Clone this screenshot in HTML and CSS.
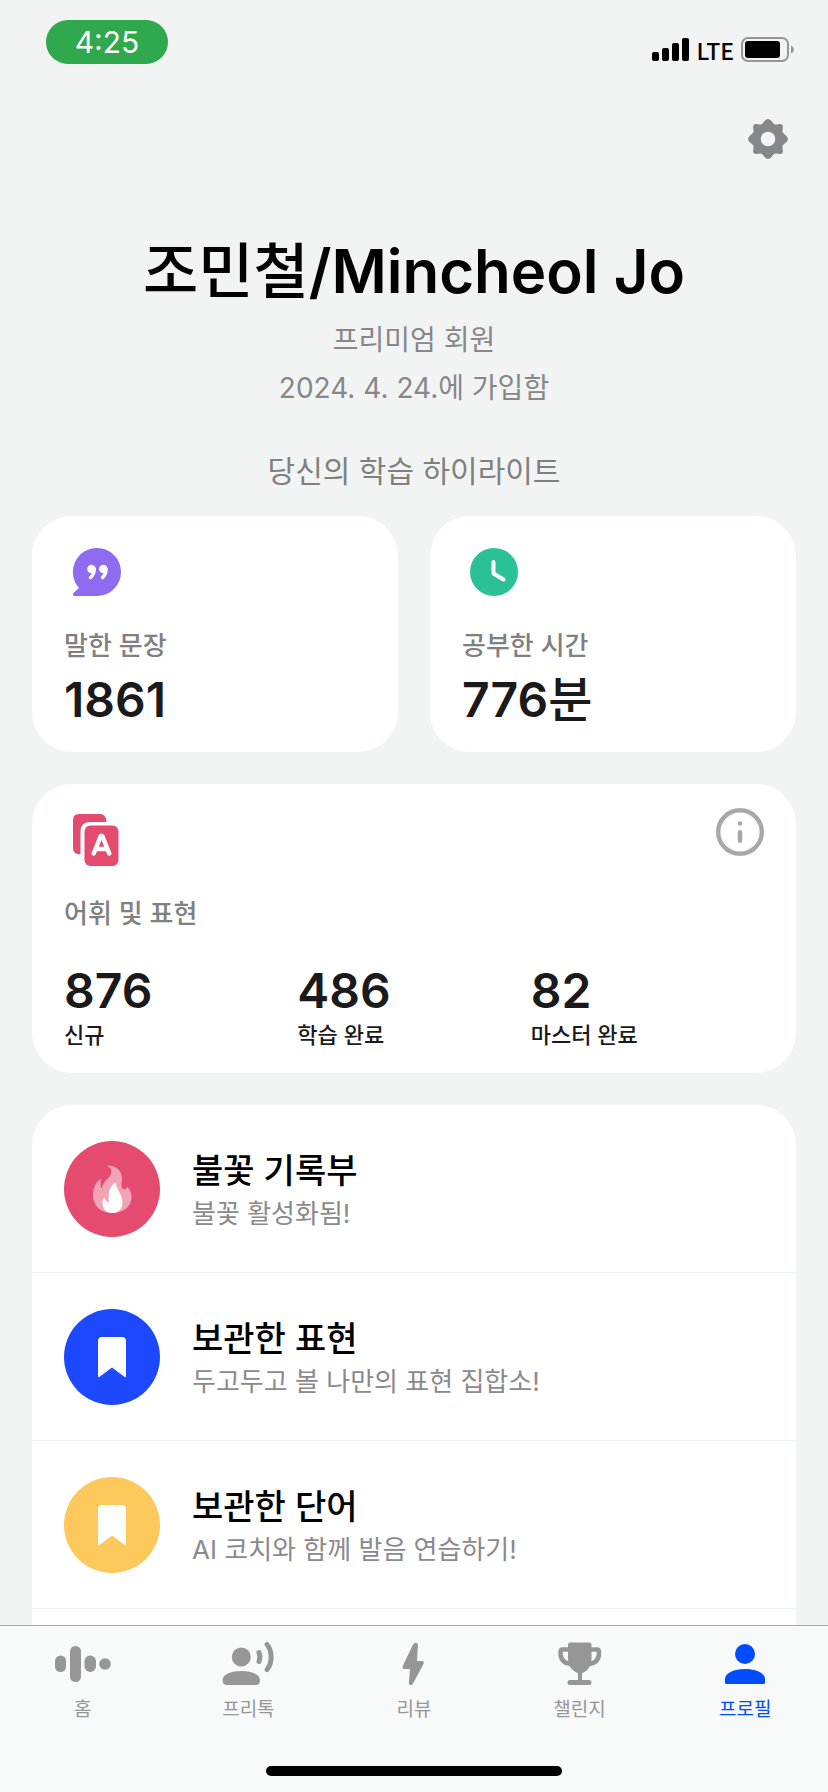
FILE: index.html
```
<!DOCTYPE html>
<html lang="ko">
<head>
<meta charset="utf-8">
<meta name="viewport" content="width=device-width, initial-scale=1">
<title>프로필</title>
<link rel="stylesheet" href="styles.css">
</head>
<body>
<div class="app">
  <header class="status">
    <span class="clock">4:25</span>
    <div class="signals">
      <svg class="bars" viewBox="0 0 37 24" aria-hidden="true">
        <rect x="0" y="14" width="7" height="9" rx="2"/><rect x="10" y="10" width="7" height="13" rx="2"/><rect x="20" y="5" width="7" height="18" rx="2"/><rect x="30" y="0" width="7" height="23" rx="2"/>
      </svg>
      <span class="network">LTE</span>
      <svg class="battery" viewBox="0 0 53 25" aria-hidden="true">
        <rect x="1" y="1" width="46" height="23" rx="6" fill="none" stroke="#969797" stroke-width="2"/>
        <rect x="4" y="4" width="35" height="17" rx="3"/>
        <path d="M50 8.500Q53 9.800 53 12.500T50 16.500Z" fill="#969797"/>
      </svg>
    </div>
  </header>

  <main class="page">
    <div class="toolbar">
      <button class="icon-button" type="button" aria-label="설정">
        <svg class="gear" viewBox="-20 -20 40 40" aria-hidden="true">
          <path fill="#87868b" fill-rule="evenodd" d="M-3.300 -18.200Q0 -21.600 3.300 -18.200L5.400 -15.600Q6.600 -14.200 8.500 -14.500L11.500 -14.900Q15.300 -15 14.900 -11.500L14.500 -8.500Q14.200 -6.600 15.600 -5.400L18.200 -3.300Q21.600 0 18.200 3.300L15.600 5.400Q14.200 6.600 14.500 8.500L14.900 11.500Q15 15.300 11.500 14.900L8.500 14.500Q6.600 14.200 5.400 15.600L3.300 18.200Q0 21.600 -3.300 18.200L-5.400 15.600Q-6.600 14.200 -8.500 14.500L-11.500 14.900Q-15.300 15 -14.900 11.500L-14.500 8.500Q-14.200 6.600 -15.600 5.400L-18.200 3.300Q-21.600 0 -18.200 -3.300L-15.600 -5.400Q-14.200 -6.600 -14.500 -8.500L-14.900 -11.500Q-15 -15.300 -11.500 -14.900L-8.500 -14.500Q-6.600 -14.200 -5.400 -15.600ZM7.300 0A7.300 7.300 0 1 0 -7.300 0A7.300 7.300 0 1 0 7.300 0Z"/>
        </svg>
      </button>
    </div>

    <section class="profile">
      <h1 class="name"><span class="hangul">조민철</span>/Mincheol Jo</h1>
      <p class="meta">프리미엄 회원</p>
      <p class="meta">2024. 4. 24.에 가입함</p>
    </section>

    <h2 class="section-title">당신의 학습 하이라이트</h2>

    <div class="cards">
      <section class="card">
        <svg class="card-icon" viewBox="0 0 64 64" aria-hidden="true">
          <path fill="#8f6bef" d="M33 8A24 24 0 0 1 33 56H10.500Q8 55.500 9.500 53L15 48A24 24 0 0 1 33 8Z"/>
          <g fill="#fff" stroke="#fff"><circle cx="27.500" cy="29" r="4.300" stroke="none"/><circle cx="39.300" cy="29" r="4.300" stroke="none"/><path fill="none" stroke-width="3.500" stroke-linecap="round" d="M30 29Q30.500 34 26.500 37.500M41.800 29Q42.300 34 38.500 37.500"/></g>
        </svg>
        <h3 class="label">말한 문장</h3>
        <p class="value">1861</p>
      </section>
      <section class="card">
        <svg class="card-icon" viewBox="0 0 64 64" aria-hidden="true">
          <circle cx="32" cy="32" r="24" fill="#2bc197"/>
          <path d="M31.500 22V33.500L41.500 39.500" fill="none" stroke="#fff" stroke-width="4" stroke-linecap="round" stroke-linejoin="round"/>
        </svg>
        <h3 class="label">공부한 시간</h3>
        <p class="value">776<span class="hangul">분</span></p>
      </section>

      <section class="card card-wide">
        <div class="card-top">
          <svg class="card-icon" viewBox="0 0 64 64" aria-hidden="true">
            <path fill="#e44b6e" d="M15 6H36Q42 6 42.500 14H26Q16.500 14 16.500 24V46.500Q9 46 9 40V12Q9 6 15 6Z"/>
            <rect x="20.500" y="17.500" width="34" height="40.500" rx="6" fill="#e44b6e"/>
            <path d="M29.700 45.500L36.500 28.500Q37.500 27 38.500 28.500L45.300 45.500M32 41H43" fill="none" stroke="#fff" stroke-width="4.500" stroke-linecap="round" stroke-linejoin="round"/>
          </svg>
          <button class="icon-button" type="button" aria-label="정보">
            <svg class="info" viewBox="0 0 48 48" aria-hidden="true">
              <circle cx="24" cy="24" r="21.800" fill="none" stroke="#a8a8a8" stroke-width="4.400"/>
              <circle cx="24" cy="15.500" r="2.300" fill="#a8a8a8"/>
              <rect x="21.800" y="22" width="4.500" height="13" rx="2.200" fill="#a8a8a8"/>
            </svg>
          </button>
        </div>
        <h3 class="label">어휘 및 표현</h3>
        <dl class="stats">
          <div class="stat"><dt>신규</dt><dd>876</dd></div>
          <div class="stat"><dt>학습 완료</dt><dd>486</dd></div>
          <div class="stat"><dt>마스터 완료</dt><dd>82</dd></div>
        </dl>
      </section>
    </div>

    <ul class="list">
      <li><a class="row" href="#">
        <span class="badge badge-red">
          <svg class="badge-icon" viewBox="0 0 96 96" aria-hidden="true">
            <path fill="#f2a4b6" d="M43 24.500C51 24 58 29 58 38C58 42 56.500 46 59 48C61.500 49 63 47.500 63 45.500C66 48 67.500 52 67.500 56C67.500 66 59 72 48 72C37 72 29 65 29 54C29 47 32 41 36.500 38C37 42 36 45 38 47.500C38.500 39 48 37 47.500 30C47.300 27.500 45.500 26 43 24.500Z"/>
            <path fill="#fff" d="M52 41C51 47 58.500 53 58.500 61C58.500 68 54 72 48.500 72C42.500 72 38.500 68 38.500 62C38.500 59.500 39 58 40.500 56.500C41 59 42.500 60.500 45 61.500C44 53 44.500 45.500 52 41Z"/>
          </svg>
        </span>
        <span class="row-text"><strong>불꽃 기록부</strong><span>불꽃 활성화됨!</span></span>
      </a></li>
      <li><a class="row" href="#">
        <span class="badge badge-blue">
          <svg class="badge-icon" viewBox="0 0 96 96" aria-hidden="true"><path fill="#fff" d="M38 28H58Q62 28 62 32V67Q62 69 60 67.500L48 58.500L36 67.500Q34 69 34 67V32Q34 28 38 28Z"/></svg>
        </span>
        <span class="row-text"><strong>보관한 표현</strong><span>두고두고 볼 나만의 표현 집합소!</span></span>
      </a></li>
      <li><a class="row" href="#">
        <span class="badge badge-yellow">
          <svg class="badge-icon" viewBox="0 0 96 96" aria-hidden="true"><path fill="#fff" d="M38 28H58Q62 28 62 32V67Q62 69 60 67.500L48 58.500L36 67.500Q34 69 34 67V32Q34 28 38 28Z"/></svg>
        </span>
        <span class="row-text"><strong>보관한 단어</strong><span>AI 코치와 함께 발음 연습하기!</span></span>
      </a></li>
    </ul>
  </main>

  <nav class="tabs">
    <div class="tab-row">
      <a class="tab" href="#">
        <svg class="tab-icon" viewBox="0 0 60 48" aria-hidden="true"><rect x="2" y="15.500" width="11" height="16.500" rx="5.500"/><rect x="17" y="6" width="11" height="36" rx="5.500"/><rect x="31.500" y="15.500" width="11.500" height="16.500" rx="5.700"/><circle cx="52" cy="24" r="5.800"/></svg>
        홈</a>
      <a class="tab" href="#">
        <svg class="tab-icon" viewBox="0 0 60 48" aria-hidden="true"><circle cx="23.300" cy="17" r="9.500"/><path d="M4.600 40C4.600 34 14 31 23.300 31S42 34 42 40Q42 45 37.500 45H9Q4.600 45 4.600 40Z"/><path fill="none" stroke="currentColor" stroke-width="5" stroke-linecap="round" stroke-linejoin="round" d="M41 12.500Q42.800 17 41 21.500M49 4.500C54.500 11 54.500 23 49 29.500"/></svg>
        프리톡</a>
      <a class="tab" href="#">
        <svg class="tab-icon" viewBox="0 0 60 48" aria-hidden="true"><path d="M29 4.500Q30 2.800 32 2.800Q34 3 34 5L33 21H38Q40.500 21.500 39.500 24L29 43.500Q28 45.500 26 45Q24.800 44.500 24.800 43L26 29H20Q18 28.500 18.800 26Z"/></svg>
        리뷰</a>
      <a class="tab" href="#">
        <svg class="tab-icon" viewBox="0 0 60 48" aria-hidden="true"><path d="M20.500 2.500H39Q41.500 2.500 41.500 5V19C41.500 27 36 32 32 33V40H39Q41.500 40 41.500 42.500T39 45H20Q17.500 45 17.500 42.500T20 40H28V33C24 32 18 27 18 19V5Q18 2.500 20.500 2.500Z"/><path fill="none" stroke="currentColor" stroke-width="4.500" d="M19 9.500H12Q10.500 9.500 10.500 13C10.500 19 14 23 20 24M40.500 9.500H47.500Q49 9.500 49 13C49 19 45.500 23 39.500 24"/></svg>
        챌린지</a>
      <a class="tab tab-active" href="#" aria-current="page">
        <svg class="tab-icon" viewBox="0 0 60 48" aria-hidden="true"><circle cx="30" cy="14" r="10"/><path d="M10 39C10 33 19 29 30 29S50 33 50 39V42.500Q50 44 48.500 44H11.500Q10 44 10 42.500Z"/></svg>
        프로필</a>
    </div>
    <div class="home-indicator"></div>
  </nav>
</div>
</body>
</html>
```
FILE: styles.css
```
* { box-sizing: border-box; margin: 0; padding: 0; }

body {
  background: #f1f4f3;
  color: #000;
  font-family: Inter, "Noto Sans CJK KR", sans-serif;
}

a { color: inherit; text-decoration: none; }
ul { list-style: none; }
svg { display: block; flex: none; }

.app {
  display: flex;
  flex-direction: column;
  height: 100vh;
  overflow: hidden;
}

.status {
  display: flex;
  flex: none;
  justify-content: space-between;
  align-items: flex-start;
  padding: 20px 34px 0 46px;
}

.clock {
  min-width: 122px;
  border-radius: 22px;
  background: #30a84e;
  color: #fff;
  font-size: 30px;
  line-height: 44px;
  text-align: center;
}

.signals { display: flex; align-items: center; gap: 7px; padding-top: 17px; }
.bars { width: 37px; height: 24px; }
.battery { width: 53px; height: 25px; }

.network {
  font-family: "Noto Sans CJK KR", sans-serif;
  font-size: 23px;
  line-height: 24px;
  font-weight: 500;
}

.page {
  display: flex;
  flex: 1;
  flex-direction: column;
  min-height: 0;
  padding: 0 32px;
  overflow: hidden;
}

.icon-button { border: 0; background: none; cursor: pointer; }

.toolbar { display: flex; justify-content: flex-end; padding: 55px 8px 72px; }
.gear { width: 40px; height: 40px; }

.profile { text-align: center; }
.name { margin-bottom: 5px; font-size: 60px; line-height: 80px; font-weight: 600; }
.hangul { font-weight: 500; }
.meta { color: #87878a; font-size: 28px; line-height: 48px; }

.section-title {
  margin: 35px 0 21px;
  color: #808080;
  font-size: 30px;
  line-height: 48px;
  font-weight: 400;
  text-align: center;
}

.cards {
  display: grid;
  grid-template-columns: 1fr 1fr;
  gap: 32px;
  margin-bottom: 32px;
}

.card { padding: 24px 32px; border-radius: 40px; background: #fff; }
.card-wide { grid-column: 1 / -1; padding-bottom: 22px; }
.card-top { display: flex; justify-content: space-between; align-items: flex-start; }
.card-icon { width: 64px; height: 64px; }
.info { width: 48px; height: 48px; }

.label {
  margin-top: 22px;
  color: #808080;
  font-size: 26px;
  line-height: 40px;
  font-weight: 500;
}

.value, .stat dd {
  color: #1a1a1a;
  font-size: 48px;
  line-height: 56px;
  font-weight: 600;
}

.value { margin-top: 6px; }
.stats { display: grid; grid-template-columns: repeat(3, 1fr); margin-top: 29px; }
.stat { display: flex; flex-direction: column-reverse; }
.stat dt { color: #1a1a1a; font-size: 22px; line-height: 32px; font-weight: 500; }

.list { flex: 1 0 auto; border-radius: 40px 40px 0 0; background: #fff; }

.row {
  display: flex;
  align-items: center;
  gap: 32px;
  padding: 36px 32px 35px;
  border-bottom: 1px solid #f0f3f2;
}

.badge { flex: none; border-radius: 50%; }
.badge-red { background: #e44b6e; }
.badge-blue { background: #1c49ff; }
.badge-yellow { background: #fec95c; }
.badge-icon { width: 96px; height: 96px; }

.row-text { display: flex; flex-direction: column; gap: 3px; padding-top: 2px; }
.row-text strong { font-size: 34px; line-height: 44px; font-weight: 500; }
.row-text span { color: #8a8a8d; font-size: 26px; line-height: 36px; }

.tabs {
  display: flex;
  flex: none;
  flex-direction: column;
  gap: 44px;
  padding: 14px 0 16px;
  border-top: 1px solid #a9abab;
  background: #f8f9f9;
}

.tab-row { display: grid; grid-template-columns: repeat(5, 1fr); }

.tab {
  display: flex;
  flex-direction: column;
  align-items: center;
  gap: 10px;
  color: #969696;
  font-size: 19px;
  line-height: 24px;
}

.tab-active { color: #004cff; }
.tab-icon { width: 60px; height: 48px; fill: currentColor; }

.home-indicator {
  align-self: center;
  width: 296px;
  height: 10px;
  border-radius: 5px;
  background: #000;
}
```
